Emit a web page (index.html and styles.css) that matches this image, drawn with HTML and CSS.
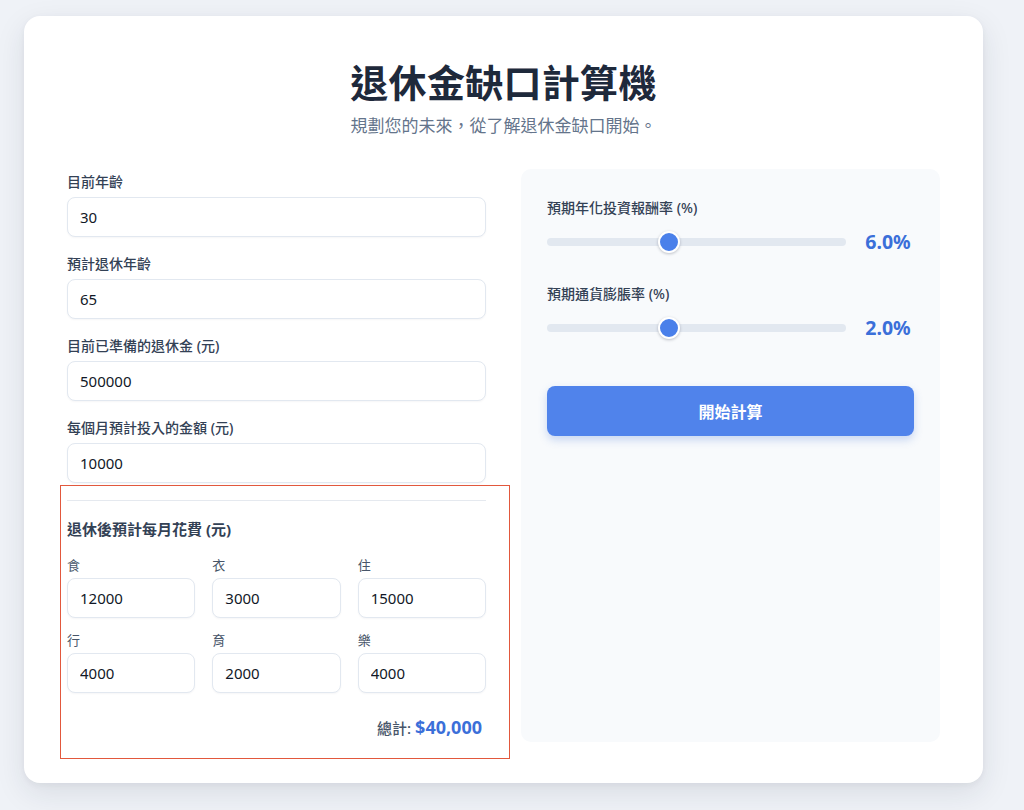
FILE: index.html
```html
<!DOCTYPE html>
<html lang="zh-Hant">
<head>
<meta charset="utf-8">
<title>退休金缺口計算機</title>
<link rel="stylesheet" href="styles.css">
</head>
<body>
<main class="card">
  <header class="head">
    <h1 class="title">退休金缺口計算機</h1>
    <p class="subtitle">規劃您的未來，從了解退休金缺口開始。</p>
  </header>
  <div class="grid">
    <section class="left">
      <div class="field">
        <label class="label">目前年齡</label>
        <input class="input" type="text" value="30">
      </div>
      <div class="field">
        <label class="label">預計退休年齡</label>
        <input class="input" type="text" value="65">
      </div>
      <div class="field">
        <label class="label">目前已準備的退休金 (元)</label>
        <input class="input" type="text" value="500000">
      </div>
      <div class="field">
        <label class="label">每個月預計投入的金額 (元)</label>
        <input class="input" type="text" value="10000">
      </div>
      <div class="expenses">
        <div class="highlight"></div>
        <h2 class="exp-title">退休後預計每月花費 (元)</h2>
        <div class="exp-grid">
          <div class="exp-item"><label class="exp-label">食</label><input class="input" type="text" value="12000"></div>
          <div class="exp-item"><label class="exp-label">衣</label><input class="input" type="text" value="3000"></div>
          <div class="exp-item"><label class="exp-label">住</label><input class="input" type="text" value="15000"></div>
          <div class="exp-item"><label class="exp-label">行</label><input class="input" type="text" value="4000"></div>
          <div class="exp-item"><label class="exp-label">育</label><input class="input" type="text" value="2000"></div>
          <div class="exp-item"><label class="exp-label">樂</label><input class="input" type="text" value="4000"></div>
        </div>
        <div class="total">總計: <span class="total-value">$40,000</span></div>
      </div>
    </section>
    <section class="panel">
      <div class="slider-group">
        <label class="label">預期年化投資報酬率 (%)</label>
        <div class="slider-row">
          <input class="range" type="range" min="0" max="15" step="0.5" value="6">
          <span class="slider-value">6.0%</span>
        </div>
      </div>
      <div class="slider-group">
        <label class="label">預期通貨膨脹率 (%)</label>
        <div class="slider-row">
          <input class="range" type="range" min="0" max="5" step="0.1" value="2">
          <span class="slider-value">2.0%</span>
        </div>
      </div>
      <button class="btn" type="button">開始計算</button>
    </section>
  </div>
</main>
</body>
</html>
```

FILE: styles.css
```css
* { box-sizing: border-box; }

html, body {
  margin: 0;
  padding: 0;
}

body {
  background: #eff2f7;
  font-family: "Noto Sans", "Noto Sans CJK TC", sans-serif;
  color: #1f2937;
  padding: 16px 0 28px 24px;
}

.card {
  width: 959px;
  background: #ffffff;
  border-radius: 16px;
  box-shadow: 0 10px 30px rgba(30, 41, 59, 0.10), 0 2px 6px rgba(30, 41, 59, 0.05);
  padding: 43px 43px 41px 43px;
}

.head {
  text-align: center;
}

.title {
  margin: 0;
  font-size: 38px;
  line-height: 46px;
  font-weight: 700;
  letter-spacing: 0.3px;
  color: #1e293b;
}

.subtitle {
  margin: 8px 0 0 0;
  font-size: 17px;
  line-height: 25px;
  color: #64748b;
}

.grid {
  display: grid;
  grid-template-columns: 419px 419px;
  column-gap: 35px;
  margin-top: 31px;
}

.left {
  display: flex;
  flex-direction: column;
  gap: 17px;
  padding-top: 3px;
}

.field {
  display: flex;
  flex-direction: column;
}

.label {
  display: block;
  font-size: 14px;
  line-height: 20px;
  font-weight: 500;
  color: #334155;
  margin-bottom: 5px;
}

.input {
  display: block;
  width: 100%;
  height: 40px;
  border: 1px solid #e2e8f0;
  border-radius: 8px;
  background: #fff;
  padding: 0 12px;
  font-family: "Noto Sans", "Noto Sans CJK TC", sans-serif;
  font-size: 15px;
  color: #111827;
  box-shadow: 0 1px 2px rgba(15, 23, 42, 0.04);
  outline: none;
}

.expenses {
  position: relative;
  border-top: 1px solid #e5e9ef;
  padding-top: 17px;
}

.highlight {
  position: absolute;
  top: -16px;
  left: -7px;
  right: -24px;
  bottom: -17px;
  border: 1.5px solid #e2583d;
  pointer-events: none;
}

.exp-title {
  margin: 0;
  font-size: 15px;
  line-height: 22px;
  font-weight: 700;
  color: #334155;
}

.exp-grid {
  display: grid;
  grid-template-columns: repeat(3, 1fr);
  column-gap: 17px;
  row-gap: 13px;
  margin-top: 16px;
}

.exp-item {
  display: flex;
  flex-direction: column;
}

.exp-label {
  font-size: 13px;
  line-height: 18px;
  color: #475569;
  margin-bottom: 4px;
}

.total {
  margin-top: 20px;
  text-align: right;
  padding-right: 4px;
  font-size: 15px;
  line-height: 28px;
  font-weight: 500;
  color: #475569;
}

.total-value {
  font-size: 18px;
  font-weight: 700;
  color: #3b6fd9;
}

.panel {
  background: #f8fafc;
  border-radius: 10px;
  padding: 29px 26px 28px 26px;
}

.slider-group + .slider-group {
  margin-top: 28px;
}

.slider-group .label {
  margin-bottom: 10px;
}

.slider-row {
  display: flex;
  align-items: center;
  gap: 16px;
  height: 28px;
}

.range {
  -webkit-appearance: none;
  appearance: none;
  flex: 1;
  height: 8px;
  margin: 0;
  border-radius: 4px;
  background: #e2e8f0;
  outline: none;
}

.range::-webkit-slider-thumb {
  -webkit-appearance: none;
  appearance: none;
  width: 22px;
  height: 22px;
  border-radius: 50%;
  background: #4a80ea;
  border: 2px solid #ffffff;
  box-shadow: 0 1px 3px rgba(15, 23, 42, 0.25);
  cursor: pointer;
}

.slider-value {
  width: 52px;
  text-align: center;
  font-size: 19.5px;
  line-height: 28px;
  font-weight: 700;
  color: #3b6fd9;
}

.btn {
  display: block;
  width: 100%;
  height: 50px;
  margin-top: 44px;
  border: none;
  border-radius: 8px;
  background: #5083eb;
  color: #ffffff;
  font-family: "Noto Sans", "Noto Sans CJK TC", sans-serif;
  font-size: 16px;
  font-weight: 700;
  box-shadow: 0 4px 8px rgba(59, 111, 217, 0.25);
  cursor: pointer;
}
```
